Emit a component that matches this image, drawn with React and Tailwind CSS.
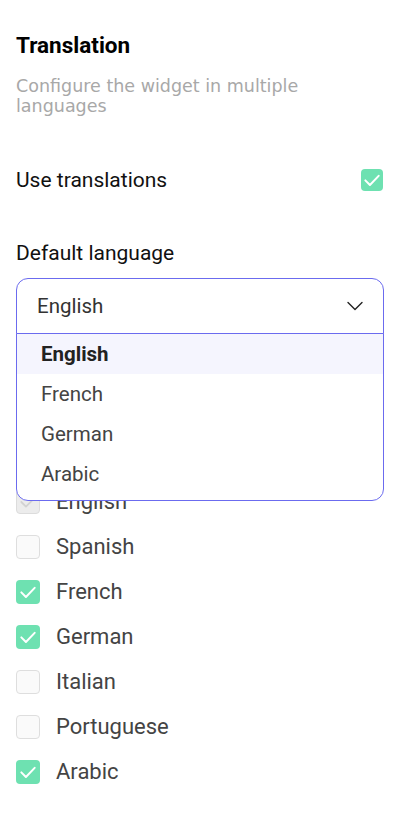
import React from 'react';

const languages = [
  { name: 'English', checked: true, disabled: true },
  { name: 'Spanish', checked: false },
  { name: 'French', checked: true },
  { name: 'German', checked: true },
  { name: 'Italian', checked: false },
  { name: 'Portuguese', checked: false },
  { name: 'Arabic', checked: true },
];

const options = ['English', 'French', 'German', 'Arabic'];

function Check({ checked, disabled, size = 'w-6 h-6' }) {
  if (disabled) {
    return (
      <span className={`${size} shrink-0 rounded-[4px] border border-[#dcdcdc] bg-[#ececec] flex items-center justify-center`}>
        <svg viewBox="0 0 24 24" className="w-[20px] h-[20px]" fill="none" stroke="#d2d2d2" strokeWidth="2.2" strokeLinecap="round" strokeLinejoin="round">
          <polyline points="4,12 9.5,17.5 20,7" />
        </svg>
      </span>
    );
  }
  if (checked) {
    return (
      <span className={`${size} shrink-0 rounded-[4px] bg-[#6ee1b1] flex items-center justify-center`}>
        <svg viewBox="0 0 24 24" className="w-[20px] h-[20px]" fill="none" stroke="#ffffff" strokeWidth="2.4" strokeLinecap="round" strokeLinejoin="round">
          <polyline points="4,12.5 9.5,18 20,7" />
        </svg>
      </span>
    );
  }
  return <span className={`${size} shrink-0 rounded-[4px] border border-[#dedede] bg-[#fafafa]`} />;
}

export default function App() {
  return (
    <div className="w-[400px] min-h-[832px] bg-white px-4 pt-[31px] font-['Roboto',sans-serif]">
      <h1 className="text-[22.5px] font-bold leading-7 text-black">Translation</h1>
      <p className="mt-[17px] pr-6 text-[17.5px] leading-5 text-[#a8a8a8] font-['DejaVu_Sans',sans-serif] font-normal">
        Configure the widget in multiple languages
      </p>

      <div className="mt-[52px] flex items-center justify-between">
        <span className="text-[21px] leading-6 text-[#111]">Use translations</span>
        <span className="mr-px"><Check checked size="w-[22px] h-[22px]" /></span>
      </div>

      <div className="mt-[49px] text-[21px] leading-6 text-[#111]">Default language</div>

      <div className="relative mt-[13px]">
        <div className="h-[56px] rounded-t-[12px] border border-[#6b6bef] flex items-center justify-between pl-5 pr-5">
          <span className="text-[20.5px] text-[#333]">English</span>
          <svg viewBox="0 0 16 10" className="w-4 h-[10px]" fill="none" stroke="#222" strokeWidth="1.4" strokeLinecap="round" strokeLinejoin="round">
            <polyline points="1,1.5 8,8.5 15,1.5" />
          </svg>
        </div>
        <ul className="absolute left-0 right-0 top-[55px] z-10 bg-white border border-[#6b6bef] rounded-b-[12px] pb-[6px]">
          {options.map((o, i) => (
            <li
              key={o}
              className={`h-10 flex items-center pl-6 text-[20.5px] ${i === 0 ? 'bg-[#f5f5fe] font-bold text-[#222]' : 'text-[#444]'}`}
            >
              {o}
            </li>
          ))}
        </ul>

        <ul className="mt-[145px] flex flex-col">
          {languages.map((l) => (
            <li key={l.name} className="h-[45px] flex items-center gap-4">
              <Check checked={l.checked} disabled={l.disabled} />
              <span className="text-[22px] text-[#444]">{l.name}</span>
            </li>
          ))}
        </ul>
      </div>
    </div>
  );
}
